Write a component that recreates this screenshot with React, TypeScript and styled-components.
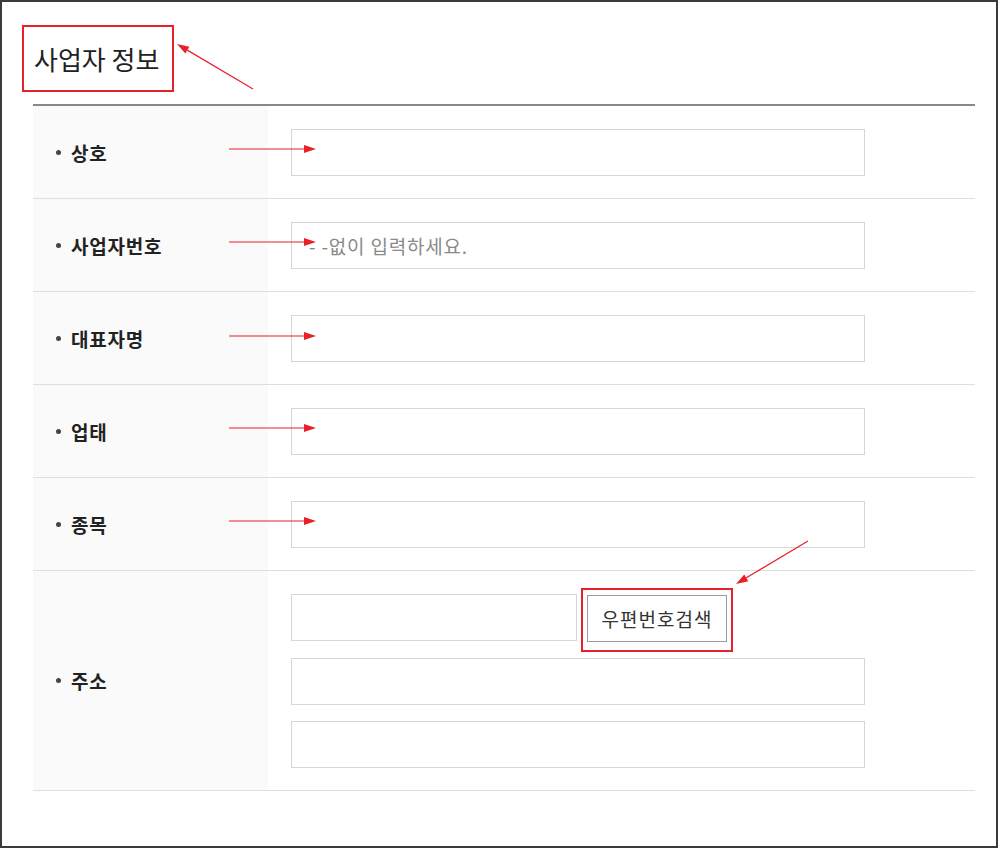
import styled, { createGlobalStyle } from 'styled-components'

const GlobalStyle = createGlobalStyle`
  html, body {
    margin: 0;
    padding: 0;
    background: #ffffff;
  }
  body {
    font-family: "Noto Sans CJK KR", "Noto Sans", sans-serif;
    color: #222;
  }
`

type Field = { label: string; placeholder?: string }

const fields: Field[] = [
  { label: '상호' },
  { label: '사업자번호', placeholder: '- -없이 입력하세요.' },
  { label: '대표자명' },
  { label: '업태' },
  { label: '종목' },
]

type Pt = [number, number]

// red annotation arrows, page coordinates
const arrows: [Pt, Pt][] = [
  [[253, 89], [177, 44]],
  [[229, 149], [316, 149]],
  [[229, 242], [316, 242]],
  [[229, 336], [316, 336]],
  [[229, 428], [316, 428]],
  [[229, 521], [316, 521]],
  [[808, 541], [736, 584]],
]

function Arrow({ from, to }: { from: Pt; to: Pt }) {
  const dx = to[0] - from[0]
  const dy = to[1] - from[1]
  const len = Math.hypot(dx, dy)
  const ux = dx / len
  const uy = dy / len
  const bx = to[0] - ux * 12
  const by = to[1] - uy * 12
  const head = [
    `${to[0]},${to[1]}`,
    `${bx - uy * 4},${by + ux * 4}`,
    `${bx + uy * 4},${by - ux * 4}`,
  ].join(' ')
  return (
    <g>
      <line x1={from[0]} y1={from[1]} x2={bx} y2={by} stroke="#e8202a" strokeWidth={1.2} />
      <polygon points={head} fill="#e8202a" />
    </g>
  )
}

export default function App() {
  return (
    <>
      <GlobalStyle />
      <Frame>
        <TitleBox>
          <Title>사업자 정보</Title>
        </TitleBox>
        <Table>
          {fields.map((f) => (
            <Row key={f.label}>
              <Label>{f.label}</Label>
              <Cell>
                <Input placeholder={f.placeholder} />
              </Cell>
            </Row>
          ))}
          <Row>
            <Label>주소</Label>
            <Cell>
              <ZipLine>
                <Input $width={286} />
                <Highlight>
                  <ZipButton type="button">우편번호검색</ZipButton>
                </Highlight>
              </ZipLine>
              <Input />
              <Input />
            </Cell>
          </Row>
        </Table>
        <Overlay width={1000} height={850} viewBox="0 0 1000 850">
          {arrows.map(([a, b], i) => (
            <Arrow key={i} from={a} to={b} />
          ))}
        </Overlay>
      </Frame>
    </>
  )
}

const Frame = styled.div`
  position: relative;
  box-sizing: border-box;
  width: 998px;
  height: 848px;
  border: 2px solid #3a3a3a;
  padding: 23px 0 0 20px;
`

const TitleBox = styled.div`
  display: inline-flex;
  align-items: center;
  box-sizing: border-box;
  width: 152px;
  height: 67px;
  border: 2px solid #e8202a;
  padding-left: 10px;
`

const Title = styled.h2`
  margin: 0;
  font-size: 26px;
  font-weight: 400;
  color: #222;
  white-space: nowrap;
`

const Table = styled.div`
  width: 942px;
  margin: 12px 0 0 11px;
  border-top: 2px solid #888;
`

const Row = styled.div`
  display: flex;
  border-bottom: 1px solid #dedede;
`

const Label = styled.div`
  display: flex;
  align-items: center;
  width: 235px;
  flex-shrink: 0;
  box-sizing: border-box;
  padding-left: 23px;
  background: #fafafa;
  font-size: 19px;
  font-weight: 700;
  letter-spacing: 0.8px;
  color: #222;

  &::before {
    content: '';
    width: 5px;
    height: 5px;
    border-radius: 50%;
    background: #444;
    margin-right: 10px;
  }
`

const Cell = styled.div`
  display: flex;
  flex-direction: column;
  gap: 16px;
  padding: 23px 0 22px 23px;
`

const Input = styled.input<{ $width?: number }>`
  box-sizing: border-box;
  width: ${(p) => p.$width ?? 574}px;
  height: 47px;
  border: 1px solid #d6d6d6;
  background: #fff;
  padding: 0 17px;
  font-family: inherit;
  font-size: 19px;
  letter-spacing: 0.8px;
  outline: none;

  &::placeholder {
    color: #8a8a8a;
  }
`

const ZipLine = styled.div`
  display: flex;
  gap: 10px;
`

const Highlight = styled.div`
  position: relative;

  &::after {
    content: '';
    position: absolute;
    left: -6px;
    right: -6px;
    top: -6px;
    bottom: -10px;
    border: 2px solid #e8202a;
    pointer-events: none;
  }
`

const ZipButton = styled.button`
  box-sizing: border-box;
  width: 140px;
  height: 47px;
  margin-top: 1px;
  padding: 0;
  border: 1px solid #9a9a9a;
  background: #fff;
  font-family: inherit;
  font-size: 19px;
  letter-spacing: 1px;
  color: #333;
  cursor: pointer;
`

const Overlay = styled.svg`
  position: absolute;
  top: -2px;
  left: -2px;
  pointer-events: none;
`
